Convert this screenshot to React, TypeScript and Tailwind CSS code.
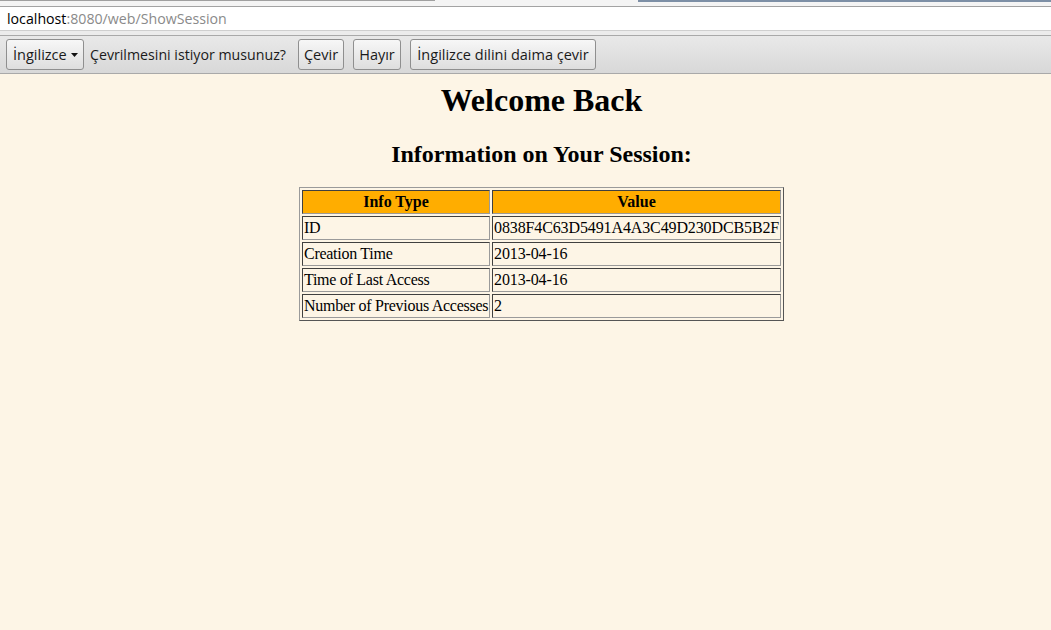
const rows: [string, string][] = [
  ['ID', '0838F4C63D5491A4A3C49D230DCB5B2F'],
  ['Creation Time', '2013-04-16'],
  ['Time of Last Access', '2013-04-16'],
  ['Number of Previous Accesses', '2'],
];

const cell =
  'h-[24px] overflow-hidden whitespace-nowrap border border-t-[#404040] border-l-[#404040] border-r-[#9a9a9a] border-b-[#9a9a9a] p-[1px] leading-[20px]';

function BarButton({ children, className = '' }: { children: React.ReactNode; className?: string }) {
  return (
    <div
      className={`flex h-[31px] items-center rounded-[3px] border border-[#8f8f8f] bg-gradient-to-b from-[#f7f7f7] to-[#dedede] px-[5px] text-[14.5px] text-[#1a1a1a] ${className}`}
    >
      {children}
    </div>
  );
}

function BrowserChrome() {
  return (
    <div className="font-['Open_Sans','Noto_Sans',sans-serif]">
      <div className="flex h-[7px] border-b border-[#a3a3a3] bg-[#f4f4f4]">
        <div className="w-[435px] border-t border-[#a0a0a0]" />
        <div className="w-[203px]" />
        <div className="flex-1 border-t-2 border-[#7d8fa6]" />
      </div>
      <div className="flex h-[23px] items-center bg-white pl-[7px] text-[14.2px]">
        <span className="text-black">localhost</span>
        <span className="text-[#8a8a8a]">:8080/web/ShowSession</span>
      </div>
      <div className="h-[6px] border-t border-b border-t-[#cfcfcf] border-b-[#a9a9a9] bg-[#ececec]" />
      <div className="flex h-[38px] items-center border-b border-[#a9a9a9] bg-gradient-to-b from-[#e9e9e9] to-[#d8d8d8] pl-[6px]">
        <BarButton className="w-[78px] gap-[4px] pl-[6px]">
          <span>İngilizce</span>
          <svg width="7" height="4" viewBox="0 0 7 4">
            <path d="M0 0h7L3.5 4z" fill="#111" />
          </svg>
        </BarButton>
        <span className="ml-[6px] w-[208px] text-[14.2px] text-[#1a1a1a]">Çevrilmesini istiyor musunuz?</span>
        <BarButton className="w-[46px] justify-center">Çevir</BarButton>
        <BarButton className="ml-[9px] w-[48px] justify-center">Hayır</BarButton>
        <BarButton className="ml-[9px] w-[186px] justify-center">İngilizce dilini daima çevir</BarButton>
      </div>
    </div>
  );
}

export default function App() {
  return (
    <div className="flex h-[630px] w-[1051px] flex-col overflow-hidden bg-[#fdf5e6]">
      <BrowserChrome />
      <div className="flex flex-col items-center pl-[32px] pt-[8px] font-['Liberation_Serif','Times_New_Roman',serif] text-black">
        <h1 className="mb-[21px] text-[32px] font-bold leading-[37px]">Welcome Back</h1>
        <h2 className="mb-[19px] text-[24px] font-bold leading-[28px]">Information on Your Session:</h2>
        <table className="w-[485px] table-fixed border-separate border-spacing-[2px] border border-t-[#9a9a9a] border-l-[#9a9a9a] border-r-[#555] border-b-[#555] text-[16px]">
          <thead>
            <tr>
              <th className={`${cell} w-[188px] bg-[#ffad00] font-bold`}>Info Type</th>
              <th className={`${cell} bg-[#ffad00] font-bold`}>Value</th>
            </tr>
          </thead>
          <tbody>
            {rows.map(([k, v]) => (
              <tr key={k}>
                <td className={`${cell} tracking-[-0.27px]`}>{k}</td>
                <td className={`${cell} tracking-[-0.12px]`}>{v}</td>
              </tr>
            ))}
          </tbody>
        </table>
      </div>
    </div>
  );
}
